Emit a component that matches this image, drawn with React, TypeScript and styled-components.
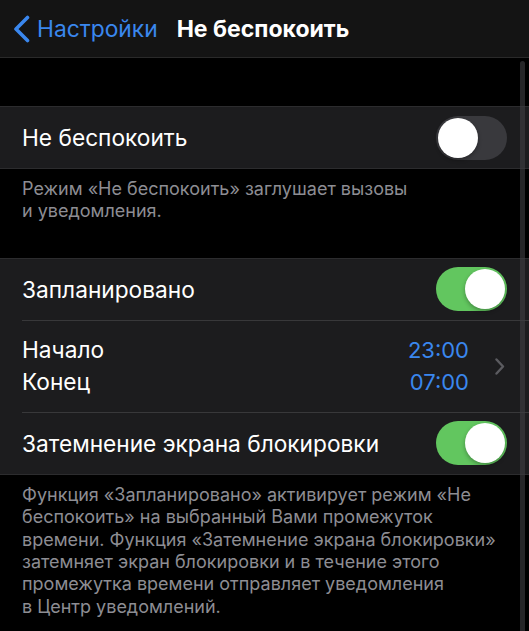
import React, { useState } from 'react';
import styled, { createGlobalStyle } from 'styled-components';

const GlobalStyle = createGlobalStyle`
  body {
    margin: 0;
    padding: 0;
    background: #000;
    font-family: Inter, "Noto Sans", "Liberation Sans", sans-serif;
    -webkit-font-smoothing: antialiased;
  }
`;

const Screen = styled.div`
  position: relative;
  width: 529px;
  height: 631px;
  overflow: hidden;
  background: #000;
`;

const NavBar = styled.header`
  display: flex;
  align-items: center;
  height: 57px;
  padding-left: 13px;
  background: #141414;
  border-bottom: 1px solid #2a2a2a;
`;

const BackButton = styled.button`
  display: flex;
  align-items: center;
  gap: 7px;
  padding: 0;
  border: none;
  background: none;
  color: #3a87ee;
  font: inherit;
  font-size: 22.8px;
  cursor: pointer;
`;

const Title = styled.h1`
  margin: 0 0 0 19px;
  color: #fff;
  font-size: 23px;
  font-weight: 700;
`;

const Gap = styled.div<{ $h: number }>`
  height: ${(p) => p.$h}px;
`;

const Group = styled.section`
  background: #1c1c1e;
  border-top: 1px solid #2c2c2e;
  border-bottom: 1px solid #2c2c2e;
`;

const Row = styled.div`
  padding-left: 22px;
`;

const RowBody = styled.div<{ $divider?: boolean; $h?: number }>`
  display: flex;
  align-items: center;
  justify-content: space-between;
  height: ${(p) => p.$h ?? 61}px;
  padding-right: 22px;
  border-top: ${(p) => (p.$divider ? '1px solid #38383a' : 'none')};
`;

const Label = styled.span`
  color: #fff;
  font-size: 22.7px;
`;

const Stack = styled.div`
  display: flex;
  flex-direction: column;
  line-height: 32px;
`;

const TimeStack = styled(Stack)`
  align-items: flex-end;
  color: #3a87ee;
  font-size: 22px;
`;

const TimeSide = styled.div`
  display: flex;
  align-items: center;
  gap: 26px;
  padding-right: 2px;
`;

const Footer = styled.p`
  margin: 0;
  padding: 9px 22px 0 22px;
  color: #8d8d93;
  font-size: 18px;
  line-height: 22.4px;
`;

const SwitchTrack = styled.button<{ $on: boolean }>`
  position: relative;
  width: 71px;
  height: 44px;
  padding: 0;
  border: none;
  border-radius: 22px;
  background: ${(p) => (p.$on ? '#62c65f' : '#39393d')};
  cursor: pointer;
  flex-shrink: 0;
`;

const SwitchKnob = styled.span<{ $on: boolean }>`
  position: absolute;
  top: 2px;
  left: ${(p) => (p.$on ? '29px' : '2px')};
  width: 40px;
  height: 40px;
  border-radius: 50%;
  background: #fff;
  box-shadow: 0 2px 4px rgba(0, 0, 0, 0.3);
`;

const ScrollIndicator = styled.div`
  position: absolute;
  top: 61px;
  bottom: 0;
  right: 4px;
  width: 5px;
  border-radius: 3px 3px 0 0;
  background: rgba(64, 64, 66, 0.6);
`;

const Switch = ({ initial }: { initial: boolean }) => {
  const [on, setOn] = useState(initial);
  return (
    <SwitchTrack $on={on} onClick={() => setOn(!on)}>
      <SwitchKnob $on={on} />
    </SwitchTrack>
  );
};

const BackChevron = () => (
  <svg width="17" height="28" viewBox="0 0 17 28" fill="none">
    <path
      d="M14.5 2.5 L3 14 L14.5 25.5"
      stroke="#3a87ee"
      strokeWidth="3.6"
      strokeLinecap="round"
      strokeLinejoin="round"
    />
  </svg>
);

const Chevron = () => (
  <svg width="10" height="17" viewBox="0 0 10 17" fill="none">
    <path
      d="M1.5 1.5 L8 8.5 L1.5 15.5"
      stroke="#5b5b60"
      strokeWidth="2.4"
      strokeLinecap="round"
      strokeLinejoin="round"
    />
  </svg>
);

const App = () => {
  return (
    <Screen>
      <GlobalStyle />
      <NavBar>
        <BackButton>
          <BackChevron />
          Настройки
        </BackButton>
        <Title>Не беспокоить</Title>
      </NavBar>

      <Gap $h={48} />

      <Group>
        <Row>
          <RowBody>
            <Label>Не беспокоить</Label>
            <Switch initial={false} />
          </RowBody>
        </Row>
      </Group>
      <Footer>
        Режим «Не беспокоить» заглушает вызовы
        <br />и уведомления.
      </Footer>

      <Gap $h={35} />

      <Group>
        <Row>
          <RowBody>
            <Label>Запланировано</Label>
            <Switch initial={true} />
          </RowBody>
        </Row>
        <Row>
          <RowBody $divider $h={91}>
            <Stack>
              <Label>Начало</Label>
              <Label>Конец</Label>
            </Stack>
            <TimeSide>
              <TimeStack>
                <span>23:00</span>
                <span>07:00</span>
              </TimeStack>
              <Chevron />
            </TimeSide>
          </RowBody>
        </Row>
        <Row>
          <RowBody $divider>
            <Label>Затемнение экрана блокировки</Label>
            <Switch initial={true} />
          </RowBody>
        </Row>
      </Group>
      <Footer>
        Функция «Запланировано» активирует режим «Не
        <br />
        беспокоить» на выбранный Вами промежуток
        <br />
        времени. Функция «Затемнение экрана блокировки»
        <br />
        затемняет экран блокировки и в течение этого
        <br />
        промежутка времени отправляет уведомления
        <br />в Центр уведомлений.
      </Footer>

      <ScrollIndicator />
    </Screen>
  );
};

export default App;
